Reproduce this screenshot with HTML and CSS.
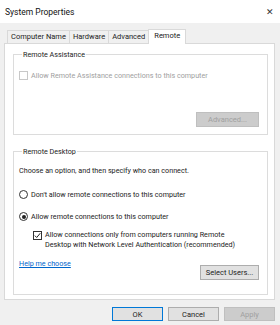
FILE: index.html
```html
<!DOCTYPE html>
<html lang="en">
<head>
    <meta charset="UTF-8">
    <title>System Properties</title>
    <link rel="stylesheet" href="styles.css">
</head>
<body>
  <div class="titlebar">
    <span class="title">System Properties</span>
    <span class="close">&#x2715;</span>
  </div>
  <div class="tabs">
    <div class="tab">Computer Name</div>
    <div class="tab">Hardware</div>
    <div class="tab">Advanced</div>
    <div class="tab active">Remote</div>
  </div>
  <div class="panel">
    <fieldset class="group group-assist">
      <legend>Remote Assistance</legend>
      <div class="row disabled"><span class="check"></span>Allow Remote Assistance connections to this computer</div>
      <div class="btnrow"><button class="btn btn-adv" disabled>Advanced...</button></div>
    </fieldset>
    <fieldset class="group group-desk">
      <legend>Remote Desktop</legend>
      <div class="row intro">Choose an option, and then specify who can connect.</div>
      <div class="row radio-row1"><span class="radio"></span>Don't allow remote connections to this computer</div>
      <div class="row radio-row2"><span class="radio on"></span>Allow remote connections to this computer</div>
      <div class="row nla"><span class="check on"><svg width="7" height="7" viewBox="0 0 7 7"><path d="M0.8 3.6 L2.7 5.5 L6.3 1.2" fill="none" stroke="#222" stroke-width="1"/></svg></span><span>Allow connections only from computers running Remote<br>Desktop with Network Level Authentication (recommended)</span></div>
      <div class="helprow">
        <a class="help" href="#">Help me choose</a>
        <button class="btn btn-users">Select Users...</button>
      </div>
    </fieldset>
  </div>
  <div class="footer">
    <button class="btn btn-ok">OK</button>
    <button class="btn">Cancel</button>
    <button class="btn" disabled>Apply</button>
  </div>
</body>
</html>
```

FILE: styles.css
```css
* {
  box-sizing: border-box;
}
body {
  margin: 0;
  background-color: #f0f0f0;
  font-family: Roboto, "Noto Sans", sans-serif;
  font-size: 7.2px;
  color: #222;
}
.titlebar {
  height: 23px;
  background-color: #fff;
  display: flex;
  align-items: center;
  justify-content: space-between;
  padding: 0 6px 0 5px;
}
.title {
  font-size: 8.5px;
  color: #111;
}
.close {
  font-size: 9px;
  color: #333;
}
.tabs {
  display: flex;
  align-items: flex-end;
  padding-left: 7px;
  margin-top: 5px;
  height: 15px;
}
.tab {
  height: 13px;
  line-height: 12px;
  padding: 0 3px;
  border: 1px solid #d9d9d9;
  border-bottom: none;
  margin-right: -1px;
  background-color: #f0f0f0;
  font-size: 7.5px;
}
.tab.active {
  height: 15px;
  background-color: #fff;
  position: relative;
  margin-bottom: -1px;
  padding: 0 5px;
}
.panel {
  margin: 0 5px 0 4px;
  height: 257px;
  background-color: #fff;
  border: 1px solid #d9d9d9;
  padding: 5px 6px 0 8px;
}
.group {
  margin: 0;
  padding: 0 8px 0 5px;
  border: 1px solid #dcdcdc;
}
.group legend {
  padding: 0 1px;
  margin-left: 3px;
  line-height: 11px;
}
.row {
  display: flex;
  align-items: center;
  line-height: 11px;
}
.disabled {
  color: #a0a0a0;
  margin-top: 10px;
}
.btnrow {
  display: flex;
  justify-content: flex-end;
  margin: 31px 0 7px;
}
.group-desk {
  margin-top: 11px;
}
.intro {
  margin-top: 8px;
}
.radio-row1 {
  margin-top: 13px;
}
.radio-row2 {
  margin-top: 11px;
}
.nla {
  margin: 8px 0 0 14px;
  align-items: flex-start;
  line-height: 10px;
}
.check {
  width: 9px;
  height: 9px;
  border: 1px solid #c8c8c8;
  margin-right: 3px;
  flex-shrink: 0;
  display: flex;
  align-items: center;
  justify-content: center;
}
.check.on {
  border-color: #333;
  margin-top: 1px;
}
.radio {
  width: 9px;
  height: 9px;
  border: 1px solid #333;
  border-radius: 50%;
  margin-right: 3px;
  display: flex;
  align-items: center;
  justify-content: center;
}
.radio.on::after {
  content: "";
  width: 4px;
  height: 4px;
  border-radius: 50%;
  background-color: #222;
}
.helprow {
  display: flex;
  justify-content: space-between;
  align-items: flex-start;
  margin: 8px 0 14px;
}
.help {
  color: #0066cc;
  line-height: 11px;
}
.btn {
  font-family: Roboto, "Noto Sans", sans-serif;
  font-size: 7.5px;
  color: #222;
  height: 15px;
  padding: 0;
  background-color: #e1e1e1;
  border: 1px solid #adadad;
  border-radius: 0;
}
.btn:disabled {
  background-color: #cccccc;
  border-color: #bfbfbf;
  color: #a0a0a0;
}
.btn-adv {
  width: 63px;
}
.btn-users {
  width: 59px;
  margin-top: 7px;
}
.footer {
  display: flex;
  justify-content: flex-end;
  gap: 5px;
  padding: 7px 5px 0 0;
}
.footer .btn {
  width: 51px;
  height: 14px;
}
.btn-ok {
  border-color: #0078d7;
}
```
